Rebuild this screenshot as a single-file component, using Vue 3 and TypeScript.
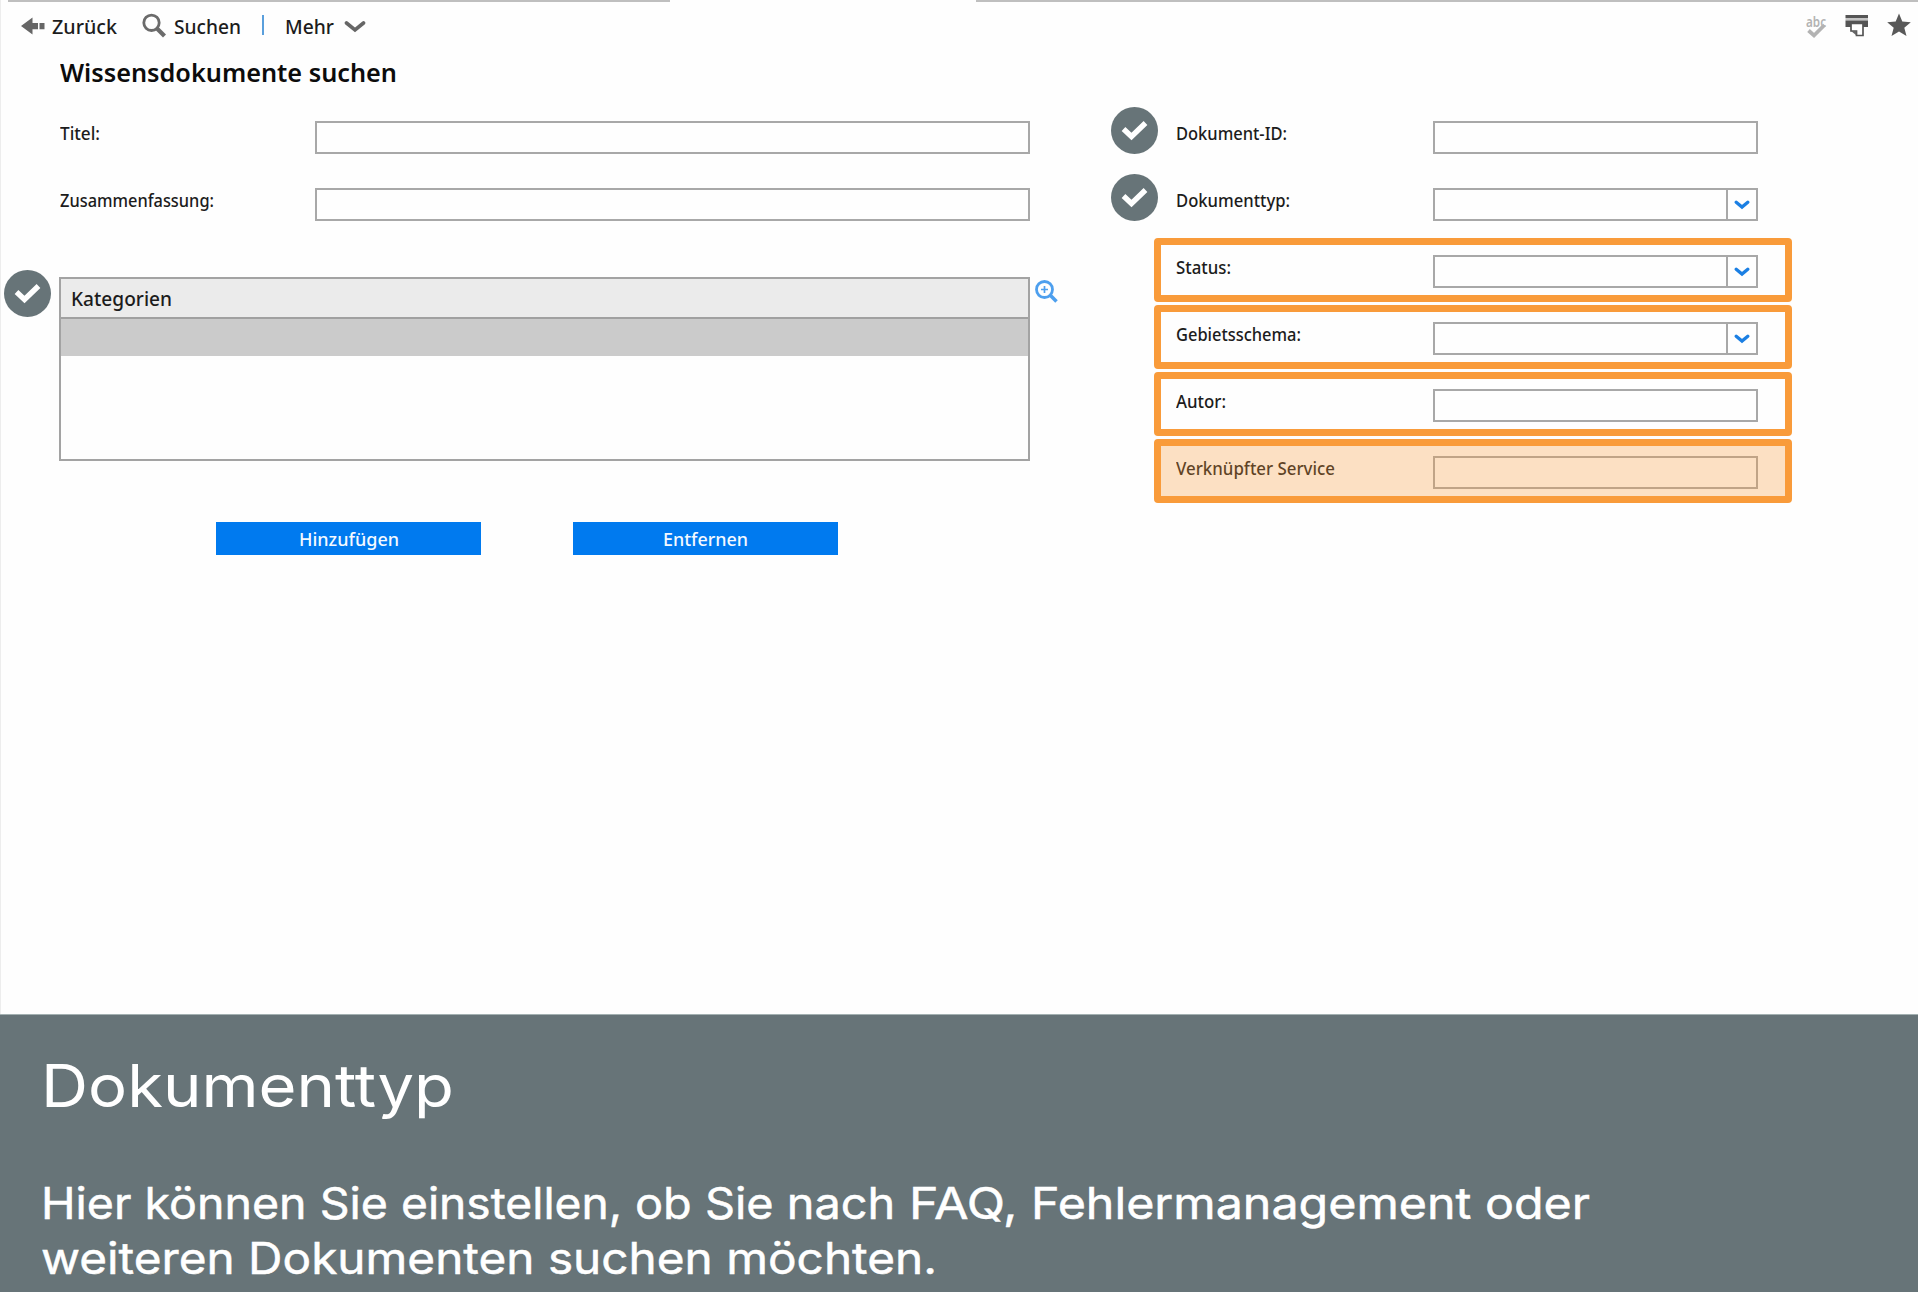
<script setup lang="ts">
interface Field {
  label: string
  width: number
  select?: boolean
  done?: boolean
  marked?: boolean
  filled?: boolean
}

interface Phrase {
  text: string
  width: number
}

const textFields: Field[] = [
  { label: 'Titel:', width: 40 },
  { label: 'Zusammenfassung:', width: 154 },
]

const filterFields: Field[] = [
  { label: 'Dokument-ID:', width: 111, done: true },
  { label: 'Dokumenttyp:', width: 114, select: true, done: true },
  { label: 'Status:', width: 55, select: true, marked: true },
  { label: 'Gebietsschema:', width: 125, select: true, marked: true },
  { label: 'Autor:', width: 50, marked: true },
  { label: 'Verknüpfter Service', width: 159, marked: true, filled: true },
]

const description: Phrase[][] = [
  [
    { text: 'Hier können Sie ', width: 360 },
    { text: 'einstellen, ', width: 234 },
    { text: 'ob Sie nach ', width: 273.5 },
    { text: 'FAQ, ', width: 122.5 },
    { text: 'Fehlermanagement oder', width: 559 },
  ],
  [{ text: 'weiteren Dokumenten suchen möchten.', width: 896 }],
]

// Stretches a line of text horizontally to the given width in pixels.
const vFit = {
  mounted(el: HTMLElement, binding: { value: number }) {
    const natural = el.getBoundingClientRect().width
    el.style.transform = `scaleX(${binding.value / natural})`
    el.style.marginRight = `${binding.value - natural}px`
  },
}
</script>

<template>
  <div class="page">
    <div class="tabline"><i class="line-a"></i><i class="line-b"></i></div>

    <header class="toolbar">
      <svg class="back" width="24" height="18" viewBox="0 0 24 18">
        <path d="M0 9 11.500.5V6H17v6.200H11.500V17.500zM18.500 6H23.500v6.200H18.500z" fill="#666" />
      </svg>
      <span class="tool t-back"><span v-fit="65" class="fit">Zurück</span></span>
      <svg class="lens" width="25" height="26" viewBox="0 0 25 26">
        <circle cx="9.500" cy="9.800" r="7.700" fill="none" stroke="#6b6b6b" stroke-width="2.800" />
        <path d="M15 15.500 22.500 23" stroke="#6b6b6b" stroke-width="4.200" />
      </svg>
      <span class="tool t-search"><span v-fit="67" class="fit">Suchen</span></span>
      <i class="divider"></i>
      <span class="tool t-more"><span v-fit="49" class="fit">Mehr</span></span>
      <svg class="more" width="22" height="14" viewBox="0 0 22 14">
        <path d="M2.500 3 11 10 19.500 3" fill="none" stroke="#666" stroke-width="3.600" stroke-linecap="round" />
      </svg>
      <div class="actions">
        <svg width="22" height="26" viewBox="0 0 22 26">
          <text x="0" y="12.500" font-size="13.500" font-weight="600" textLength="20" lengthAdjust="spacingAndGlyphs" fill="#b3b3b3" font-family="Noto Sans, sans-serif">abc</text>
          <path d="M2.500 16.500 8 21.500 18.500 11" fill="none" stroke="#b3b3b3" stroke-width="3.800" />
        </svg>
        <svg class="print" width="24" height="24" viewBox="0 0 24 24">
          <path d="M.5 1H23V4H.5z" fill="#555" />
          <path d="M.5 4H23V6.500H.5z" fill="#c4c4c4" />
          <path d="M.5 6.500H23V13H.5z" fill="#555" />
          <path d="M6 9.500H18V21.500H11.500V17H6z" fill="#fff" stroke="#555" stroke-width="1.700" />
          <path d="M6 17H11.500V21.500z" fill="#666" />
        </svg>
        <svg class="star" width="24" height="24" viewBox="0 0 24 24">
          <path d="M12 .5 15.300 8.600 23.800 9.200 17.300 14.700 19.500 23 12 18.500 4.500 23 6.700 14.700.2 9.200 8.700 8.600z" fill="#595959" />
        </svg>
      </div>
    </header>

    <h1 class="title"><span v-fit="337" class="fit">Wissensdokumente suchen</span></h1>

    <main class="form">
      <section class="left">
        <div v-for="f in textFields" :key="f.label" class="row">
          <label class="label"><span v-fit="f.width" class="fit">{{ f.label }}</span></label>
          <div class="input"></div>
        </div>
        <div class="table">
          <div class="thead"><span v-fit="101" class="fit">Kategorien</span></div>
          <div class="selected"></div>
          <svg class="badge badge-table" width="47" height="47" viewBox="0 0 47 47">
            <circle cx="23.500" cy="23.500" r="23.500" fill="#677478" />
            <path d="M12.500 22 20.500 29.500 34.500 16" fill="none" stroke="#fff" stroke-width="5.400" />
          </svg>
          <svg class="pick" width="24" height="24" viewBox="0 0 24 24">
            <circle cx="9.500" cy="9.500" r="8" fill="none" stroke="#4d9fee" stroke-width="2.800" />
            <path d="M6 9.500H13M9.500 6V13" stroke="#4d9fee" stroke-width="1.700" />
            <path d="M15.300 15.300 21.500 21.500" stroke="#4d9fee" stroke-width="3.600" />
          </svg>
        </div>
        <div class="buttons">
          <button class="btn"><span v-fit="100" class="fit">Hinzufügen</span></button>
          <button class="btn"><span v-fit="85" class="fit">Entfernen</span></button>
        </div>
      </section>

      <section class="right">
        <div v-for="f in filterFields" :key="f.label" class="filter" :class="{ marked: f.marked, filled: f.filled }">
          <svg v-if="f.done" class="badge" width="47" height="47" viewBox="0 0 47 47">
            <circle cx="23.500" cy="23.500" r="23.500" fill="#677478" />
            <path d="M12.500 22 20.500 29.500 34.500 16" fill="none" stroke="#fff" stroke-width="5.400" />
          </svg>
          <label class="label"><span v-fit="f.width" class="fit">{{ f.label }}</span></label>
          <div class="input">
            <span v-if="f.select" class="drop">
              <svg width="16" height="10" viewBox="0 0 16 10">
                <path d="M2.200 2.200 8 7 13.800 2.200" fill="none" stroke="#1b7fe3" stroke-width="3.300" stroke-linecap="round" />
              </svg>
            </span>
          </div>
        </div>
      </section>
    </main>

    <footer class="panel">
      <h2><span v-fit="413" class="fit">Dokumenttyp</span></h2>
      <p>
        <span v-for="(line, i) in description" :key="i" class="line">
          <span v-for="part in line" :key="part.text" v-fit="part.width" class="fit">{{ part.text }}</span>
        </span>
      </p>
    </footer>
  </div>
</template>

<style>
body {
  margin: 0;
  background: #fefefe;
}
</style>

<style scoped>
.page {
  box-sizing: border-box;
  width: 1918px;
  height: 1292px;
  display: flex;
  flex-direction: column;
  overflow: hidden;
  background: #fefefe;
  font-family: 'Noto Sans', sans-serif;
  color: #1c1c1c;
  box-shadow: inset 1px 0 #ededed;
}
.fit {
  display: inline-block;
  white-space: pre;
  transform-origin: 0 50%;
}
.tabline {
  display: flex;
  height: 2px;
  padding-left: 8px;
  gap: 306px;
}
.line-a {
  width: 662px;
  background: #bfbfbf;
}
.line-b {
  flex: 1;
  background: #bfbfbf;
}
.toolbar {
  box-sizing: border-box;
  display: flex;
  align-items: flex-start;
  height: 42px;
  padding: 10px 7px 0 21px;
}
.tool {
  font-size: 19.500px;
  line-height: 30px;
  font-weight: 500;
}
.back {
  margin-top: 4.500px;
}
.t-back {
  margin-left: 7px;
  width: 90px;
}
.lens {
  margin-top: 1px;
}
.t-search {
  margin-left: 7px;
  width: 88px;
}
.divider {
  width: 2px;
  height: 20px;
  margin-top: 3px;
  background: #5a9fdc;
}
.t-more {
  margin-left: 21px;
  width: 59px;
}
.more {
  margin-top: 8px;
}
.actions {
  display: flex;
  margin-left: auto;
}
.actions svg {
  margin-top: 2px;
}
.actions .print {
  margin: 2px 18px 0 17px;
}
.actions .star {
  margin-top: 1px;
}
.title {
  margin: 10px 0 0 59.500px;
  height: 36px;
  font-size: 25.500px;
  line-height: 36px;
  font-weight: 600;
  color: #0c0c0c;
}
.form {
  display: flex;
  height: 924px;
}
.left {
  width: 970px;
  padding: 31px 0 0 60px;
}
.row {
  display: flex;
  height: 67px;
}
.label {
  font-size: 17.500px;
  line-height: 25px;
  font-weight: 500;
}
.row .label {
  width: 255px;
}
.input {
  box-sizing: border-box;
  flex: 1;
  height: 33px;
  margin-top: -0.500px;
  border: 2px solid #a8a8a8;
}
.table {
  position: relative;
  box-sizing: border-box;
  height: 184px;
  margin: 22px 0 0 -1px;
  border: 2px solid #a3a3a3;
}
.thead {
  height: 38px;
  padding-left: 10px;
  border-bottom: 2px solid #a0a0a0;
  background: #ebebeb;
  font-size: 19.500px;
  line-height: 39px;
  font-weight: 500;
}
.selected {
  height: 37px;
  background: #cbcbcb;
}
.badge {
  position: absolute;
  left: -50px;
  top: -4px;
}
.badge-table {
  left: -57px;
  top: -9px;
}
.pick {
  position: absolute;
  left: 974px;
  top: 1px;
}
.buttons {
  display: flex;
  gap: 92px;
  margin: 61px 0 0 156px;
}
.btn {
  width: 265px;
  height: 33px;
  padding: 0;
  border: 0;
  background: #007aef;
  color: #f4f9ff;
  font-family: inherit;
  font-size: 18.500px;
  line-height: 33px;
  font-weight: 500;
}
.right {
  display: flex;
  flex-direction: column;
  gap: 3px;
  width: 638px;
  padding: 14px 0 0 124px;
}
.filter {
  position: relative;
  box-sizing: border-box;
  display: flex;
  height: 64px;
  padding: 10px 27px 0 15px;
  border: 7px solid transparent;
  border-radius: 4px;
}
.filter .label {
  width: 257px;
}
.filter .input {
  display: flex;
  justify-content: flex-end;
}
.marked {
  border-color: #f99b3a;
}
.filled::after {
  content: '';
  position: absolute;
  inset: 0;
  background: rgba(249, 155, 58, 0.3);
}
.drop {
  box-sizing: border-box;
  display: flex;
  align-items: center;
  justify-content: center;
  width: 30px;
  border-left: 2px solid #a8a8a8;
}
.drop svg {
  margin-top: 2px;
}
.panel {
  box-sizing: border-box;
  flex: 1;
  padding-left: 41px;
  border-top: 1px solid #a3b0b1;
  background: #677478;
  color: #fff;
  font-family: Inter, sans-serif;
}
.panel h2 {
  margin: 35px 0 0;
  font-size: 59px;
  line-height: 72px;
  font-weight: 400;
}
.panel p {
  margin: 54px 0 0;
  font-size: 44px;
  line-height: 55px;
  font-weight: 400;
  -webkit-text-stroke: 0.500px #fff;
}
.line {
  display: flex;
  height: 55px;
}
</style>
